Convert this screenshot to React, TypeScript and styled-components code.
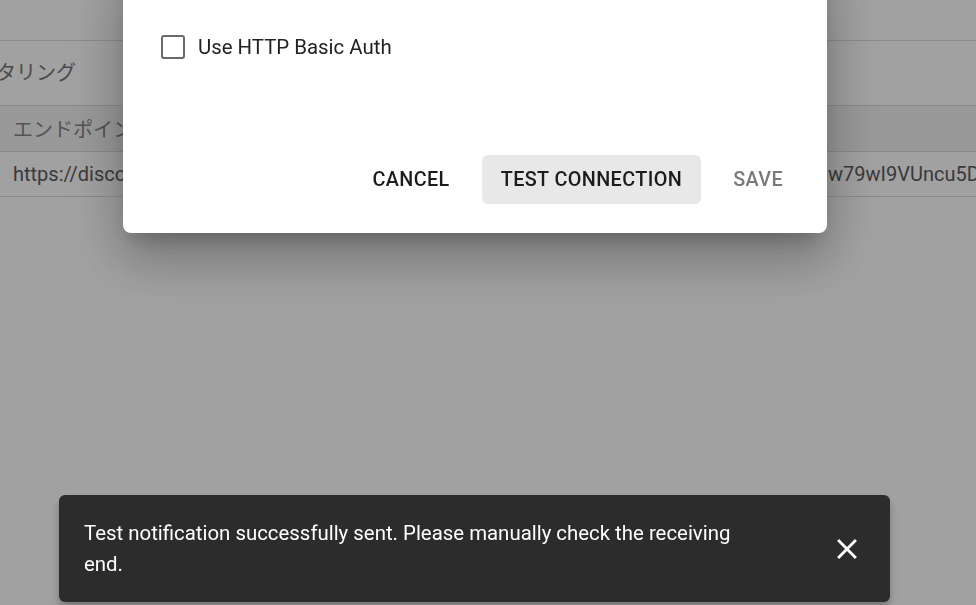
import React from "react";
import styled, { createGlobalStyle } from "styled-components";

const GlobalStyle = createGlobalStyle`
  html, body { margin: 0; padding: 0; }
  body {
    width: 976px;
    height: 605px;
    overflow: hidden;
    background: #ffffff;
    font-family: Roboto, "Noto Sans CJK JP", "Liberation Sans", sans-serif;
  }
`;

const Page = styled.div`
  width: 976px;
  height: 605px;
  background: #ffffff;
  display: flex;
  flex-direction: column;
  overflow: hidden;
`;

const TopRow = styled.div`
  height: 41px;
  flex-shrink: 0;
  border-bottom: 1px solid #dcdcdc;
  box-sizing: border-box;
`;

const SectionTitle = styled.div`
  height: 65px;
  flex-shrink: 0;
  display: flex;
  align-items: center;
  font-size: 20px;
  color: #747474;
  white-space: nowrap;
  padding-bottom: 3px;
  margin-left: -44px;
  border-bottom: 1px solid #dcdcdc;
  box-sizing: border-box;
`;

const Row = styled.div<{ $head?: boolean; $h: number }>`
  height: ${(p) => p.$h}px;
  flex-shrink: 0;
  display: flex;
  align-items: center;
  padding-left: 13px;
  font-size: 20px;
  white-space: nowrap;
  background: ${(p) => (p.$head ? "#f3f3f3" : "#ffffff")};
  color: ${(p) => (p.$head ? "#858585" : "#5c5c5c")};
  border-bottom: 1px solid #dcdcdc;
  box-sizing: border-box;
`;

const UrlHead = styled.span`
  display: inline-block;
  flex-shrink: 0;
  width: 815px;
  overflow: hidden;
`;

const UrlTail = styled.span`
  flex-shrink: 0;
`;

const Backdrop = styled.div`
  position: fixed;
  inset: 0;
  background: rgba(0, 0, 0, 0.37);
`;

const Dialog = styled.div`
  position: fixed;
  left: 123px;
  top: -40px;
  width: 704px;
  height: 273px;
  box-sizing: border-box;
  background: #ffffff;
  border-radius: 8px;
  box-shadow: 0 14px 19px -9px rgba(0, 0, 0, 0.22),
    0 30px 48px 4px rgba(0, 0, 0, 0.15), 0 11px 58px 10px rgba(0, 0, 0, 0.13);
  display: flex;
  flex-direction: column;
  padding: 75px 25px 29px 38px;
`;

const CheckRow = styled.label`
  display: flex;
  align-items: center;
  gap: 13px;
  font-size: 20.4px;
  color: #222222;
  height: 24px;
`;

const Box = styled.span`
  width: 24px;
  height: 24px;
  box-sizing: border-box;
  border: 2px solid #6a6a6a;
  border-radius: 3px;
  flex-shrink: 0;
`;

const Actions = styled.div`
  margin-top: auto;
  display: flex;
  justify-content: flex-end;
  align-items: center;
  gap: 13px;
`;

const Button = styled.button<{ $filled?: boolean; $disabled?: boolean }>`
  height: 49px;
  padding: 0 19px;
  border: none;
  border-radius: 6px;
  font-family: Roboto, "Liberation Sans", sans-serif;
  font-size: 19.8px;
  font-weight: 500;
  letter-spacing: 0.4px;
  text-transform: uppercase;
  background: ${(p) => (p.$filled ? "#e8e8e8" : "transparent")};
  color: ${(p) => (p.$disabled ? "#7a7a7a" : "#1c1c1c")};
  cursor: pointer;
`;

const Snackbar = styled.div`
  position: fixed;
  left: 59px;
  top: 495px;
  width: 831px;
  height: 107px;
  box-sizing: border-box;
  background: #2c2c2c;
  border-radius: 6px;
  box-shadow: 0 4px 7px -1px rgba(0, 0, 0, 0.2), 0 7px 12px 0 rgba(0, 0, 0, 0.14);
  display: flex;
  align-items: center;
  padding: 0 26px 0 25px;
`;

const Message = styled.div`
  width: 680px;
  font-size: 20.4px;
  line-height: 31px;
  color: #ffffff;
`;

const CloseButton = styled.button`
  margin-left: auto;
  width: 34px;
  height: 34px;
  padding: 0;
  border: none;
  background: transparent;
  color: #ffffff;
  display: flex;
  align-items: center;
  justify-content: center;
`;

export default function App() {
  return (
    <>
      <GlobalStyle />
      <Page>
        <TopRow />
        <SectionTitle>モニタリング</SectionTitle>
        <Row $head $h={46}>エンドポイント</Row>
        <Row $h={45}>
          <UrlHead>https://discord.com/api/webhooks/1148237711234567890/Xk3bQ2</UrlHead>
          <UrlTail>w79wI9VUncu5DqZp0aR</UrlTail>
        </Row>
      </Page>
      <Backdrop />
      <Dialog>
        <CheckRow>
          <Box />
          Use HTTP Basic Auth
        </CheckRow>
        <Actions>
          <Button>Cancel</Button>
          <Button $filled>Test Connection</Button>
          <Button $disabled>Save</Button>
        </Actions>
      </Dialog>
      <Snackbar>
        <Message>
          Test notification successfully sent. Please manually check the receiving end.
        </Message>
        <CloseButton aria-label="close">
          <svg width="34" height="34" viewBox="0 0 24 24" fill="currentColor">
            <path d="M19 6.41 17.59 5 12 10.59 6.41 5 5 6.41 10.59 12 5 17.59 6.41 19 12 13.41 17.59 19 19 17.59 13.41 12z" />
          </svg>
        </CloseButton>
      </Snackbar>
    </>
  );
}
